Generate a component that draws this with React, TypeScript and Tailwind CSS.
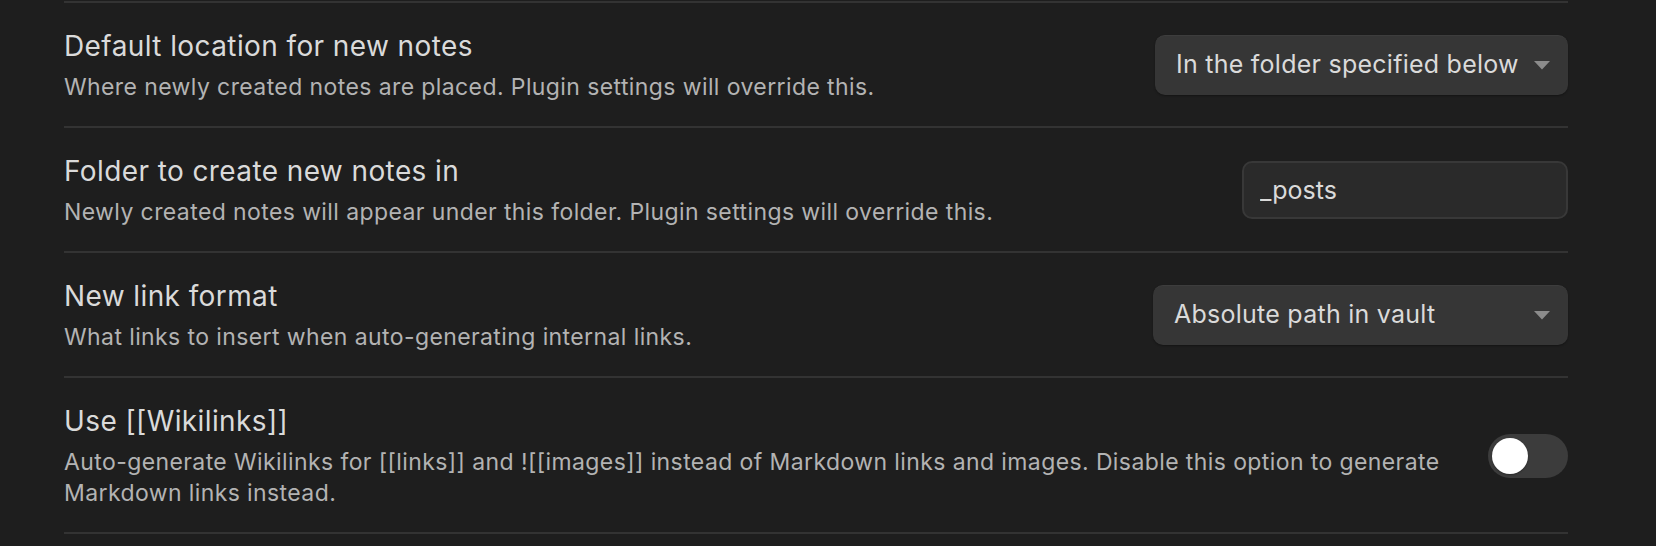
import React, { useState } from 'react';

type Control =
  | { kind: 'dropdown'; value: string; width: string }
  | { kind: 'text'; value: string }
  | { kind: 'toggle'; on: boolean };

interface SettingRow {
  name: string;
  desc: React.ReactNode;
  control: Control;
}

const rows: SettingRow[] = [
  {
    name: 'Default location for new notes',
    desc: 'Where newly created notes are placed. Plugin settings will override this.',
    control: { kind: 'dropdown', value: 'In the folder specified below', width: 'w-[413px]' },
  },
  {
    name: 'Folder to create new notes in',
    desc: 'Newly created notes will appear under this folder. Plugin settings will override this.',
    control: { kind: 'text', value: '_posts' },
  },
  {
    name: 'New link format',
    desc: 'What links to insert when auto-generating internal links.',
    control: { kind: 'dropdown', value: 'Absolute path in vault', width: 'w-[415px]' },
  },
  {
    name: 'Use [[Wikilinks]]',
    desc: (
      <>
        Auto-generate Wikilinks for [[links]] and ![[images]] instead of Markdown links and images. Disable this option to generate
        <br />
        Markdown links instead.
      </>
    ),
    control: { kind: 'toggle', on: false },
  },
];

function Dropdown({ value, width }: { value: string; width: string }) {
  return (
    <button
      className={`${width} h-[60px] mb-[4px] rounded-[10px] bg-[#363636] border-t border-[#3d3d3d] shadow-[0_1px_2px_rgba(0,0,0,0.35)] flex items-center justify-between pl-[21px] pr-[18px] text-[25px] tracking-[0.25px] text-[#dadada]`}
    >
      <span>{value}</span>
      <svg width="16" height="9" viewBox="0 0 16 9">
        <path d="M0 0 L16 0 L8 8.5 Z" fill="#8c8c8c" />
      </svg>
    </button>
  );
}

function Toggle({ initial }: { initial: boolean }) {
  const [on, setOn] = useState(initial);
  return (
    <button
      onClick={() => setOn(!on)}
      className={`w-[80px] h-[44px] mb-[3px] rounded-full p-[4px] flex ${on ? 'bg-[#7f6df2] justify-end' : 'bg-[#3c3c3c] justify-start'}`}
    >
      <span className="w-[36px] h-[36px] rounded-full bg-white shadow-[0_1px_2px_rgba(0,0,0,0.3)]" />
    </button>
  );
}

export default function App() {
  const [folder, setFolder] = useState('_posts');

  return (
    <div className="w-[1656px] h-[546px] bg-[#1e1e1e] pt-px pl-[64px] pr-[88px] overflow-hidden font-['Inter',sans-serif] antialiased">
      {rows.map((row) => (
        <div key={row.name} className="border-t-2 border-[#333333] flex items-center pt-[27px] pb-[23px]">
          <div className="flex-1 mr-[40px]">
            <div className="text-[28px] leading-[32px] tracking-[0.4px] text-[#dadada]">{row.name}</div>
            <div className="mt-[10px] text-[23px] leading-[31px] tracking-[0.4px] text-[#b3b3b3]">{row.desc}</div>
          </div>
          {row.control.kind === 'dropdown' && <Dropdown value={row.control.value} width={row.control.width} />}
          {row.control.kind === 'text' && (
            <input
              value={folder}
              onChange={(e) => setFolder(e.target.value)}
              className="w-[326px] h-[58px] mb-[4px] rounded-[10px] bg-[#2a2a2a] border-2 border-[#383838] pl-[16px] text-[25px] text-[#dadada] outline-none"
            />
          )}
          {row.control.kind === 'toggle' && <Toggle initial={row.control.on} />}
        </div>
      ))}
      <div className="border-t-2 border-[#333333]" />
    </div>
  );
}
